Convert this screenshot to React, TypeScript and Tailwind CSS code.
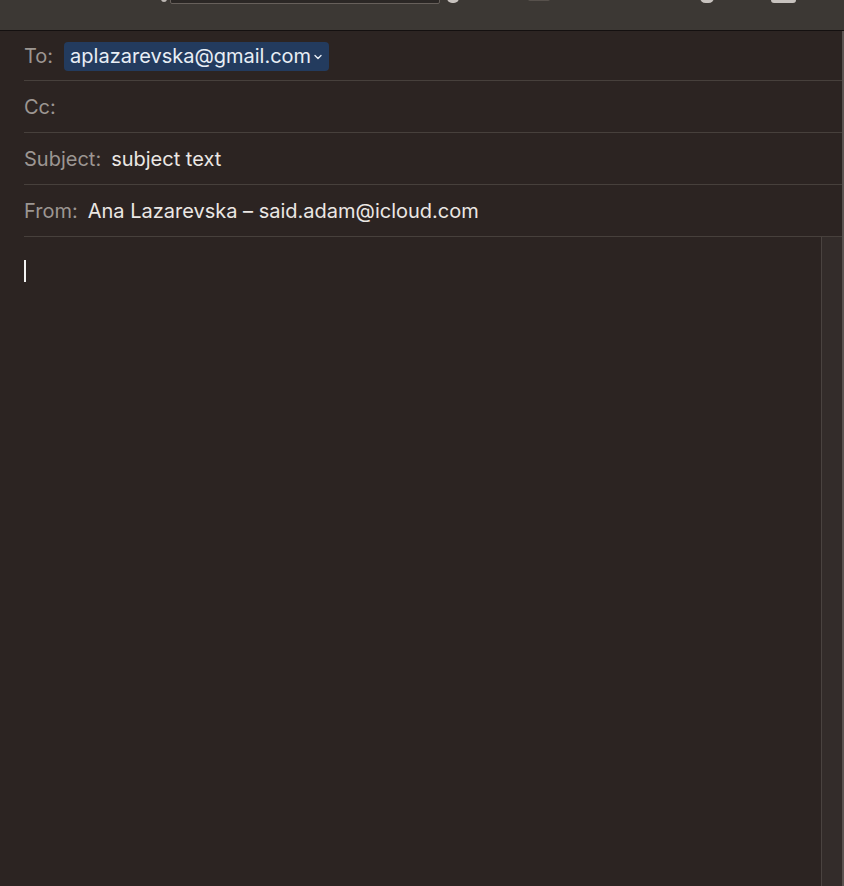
import React from "react";

const font = { fontFamily: 'Inter, "Liberation Sans", Arial, sans-serif' };

function Row({ label, children, first }: { label: string; children?: React.ReactNode; first?: boolean }) {
  return (
    <div className={`flex items-center border-b border-[#47403c] ${first ? "h-[50px]" : "h-[52px]"}`}>
      <span className="text-[20px] text-[#9c9692] mr-[10px]">{label}</span>
      {children}
    </div>
  );
}

export default function App() {
  return (
    <div className="w-[844px] h-[886px] bg-[#2c2422] flex flex-col overflow-hidden" style={font}>
      {/* toolbar, cut off at the top */}
      <div className="h-[31px] bg-[#3c3834] border-b border-[#141010] shrink-0 relative overflow-hidden">
        <div className="absolute left-[161px] top-[-4px] w-[6px] h-[6px] rounded-full bg-[#bdb8b4]" />
        <div className="absolute left-[170px] top-[-6px] w-[270px] h-[10px] rounded-[2px] border border-[#67605b] bg-[#2b2725]" />
        <div className="absolute left-[447px] top-[-7px] w-[12px] h-[10px] rounded-full bg-[#c7c2be]" />
        <div className="absolute left-[528px] top-[-4px] w-[22px] h-[5px] rounded-[2px] bg-[#57514c]" />
        <div className="absolute left-[700px] top-[-8px] w-[14px] h-[11px] rounded-full bg-[#c7c2be]" />
        <div className="absolute left-[771px] top-[-8px] w-[25px] h-[11px] rounded-[3px] bg-[#c7c2be]" />
      </div>

      <div className="flex flex-1 min-h-0">
        <div className="flex-1 flex flex-col pl-6">
          <Row label="To:" first>
            <span className="flex items-center h-[29px] px-[6px] ml-[1px] mt-[1px] rounded-[4px] bg-[#233b5e] text-[20px] text-[#e8eef5]">
              aplazarevska@gmail.com
              <svg width="10" height="8" viewBox="0 0 10 8" className="ml-[2px] mt-[2px]">
                <path d="M2 2.5 L5 5.5 L8 2.5" fill="none" stroke="#e8eef5" strokeWidth="1.4" strokeLinecap="round" strokeLinejoin="round" />
              </svg>
            </span>
          </Row>
          <Row label="Cc:" />
          <Row label="Subject:">
            <span className="text-[20px] text-[#ebe7e4]">subject text</span>
          </Row>
          <Row label="From:">
            <span className="text-[20px] text-[#ebe7e4]">Ana Lazarevska – said.adam@icloud.com</span>
          </Row>
          <div className="flex flex-1 min-h-0">
            <div className="flex-1 pt-[23px]">
              <div className="w-[2px] h-[22px] bg-[#f2f2f2]" />
            </div>
            <div className="w-[21px] bg-[#332c2a] border-l border-[#4a4340]" />
          </div>
        </div>
        <div className="w-[2px] bg-[#5a5350]" />
      </div>
    </div>
  );
}
